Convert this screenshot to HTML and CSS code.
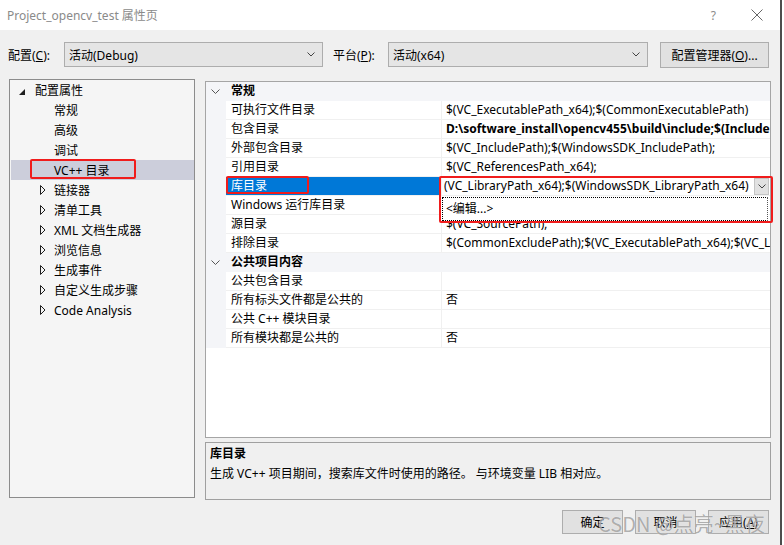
FILE: index.html
```html
<!DOCTYPE html>
<html lang="zh-CN">
<head>
    <meta charset="UTF-8">
    <title>Project_opencv_test 属性页</title>
    <link rel="stylesheet" href="styles.css">
</head>
<body>
<div class="window">

    <div class="titlebar">
        <span class="title">Project_opencv_test 属性页</span>
        <span class="help">?</span>
        <span class="close">
            <svg width="12" height="12" viewBox="0 0 12 12"><path d="M0.5 0.5 L11.5 11.5 M11.5 0.5 L0.5 11.5" stroke="#666" stroke-width="1" fill="none"/></svg>
        </span>
    </div>

    <div class="toolbar">
        <span class="label cfg-label">配置(<u>C</u>):</span>
        <div class="combo cfg-combo">
            <span>活动(Debug)</span>
            <svg class="chev" width="8" height="5" viewBox="0 0 8 5"><path d="M0.5 0.5 L4 4 L7.5 0.5" stroke="#444" fill="none"/></svg>
        </div>
        <span class="label plat-label">平台(<u>P</u>):</span>
        <div class="combo plat-combo">
            <span>活动(x64)</span>
            <svg class="chev" width="8" height="5" viewBox="0 0 8 5"><path d="M0.5 0.5 L4 4 L7.5 0.5" stroke="#444" fill="none"/></svg>
        </div>
        <button class="btn manager-btn">配置管理器(<u>O</u>)...</button>
    </div>

    <div class="main">
        <div class="tree">
            <div class="tree-item root">
                <span class="twisty"><svg width="6" height="6" viewBox="0 0 6 6"><polygon points="6,0 6,6 0,6" fill="#1e1e1e"/></svg></span>
                配置属性
            </div>
            <div class="tree-item child">常规</div>
            <div class="tree-item child">高级</div>
            <div class="tree-item child">调试</div>
            <div class="tree-item child selected">VC++ 目录</div>
            <div class="tree-item child"><span class="twisty"><svg width="6" height="10" viewBox="0 0 6 10"><polygon points="0.5,0.5 5,5 0.5,9.5" fill="none" stroke="#1e1e1e"/></svg></span>链接器</div>
            <div class="tree-item child"><span class="twisty"><svg width="6" height="10" viewBox="0 0 6 10"><polygon points="0.5,0.5 5,5 0.5,9.5" fill="none" stroke="#1e1e1e"/></svg></span>清单工具</div>
            <div class="tree-item child"><span class="twisty"><svg width="6" height="10" viewBox="0 0 6 10"><polygon points="0.5,0.5 5,5 0.5,9.5" fill="none" stroke="#1e1e1e"/></svg></span>XML 文档生成器</div>
            <div class="tree-item child"><span class="twisty"><svg width="6" height="10" viewBox="0 0 6 10"><polygon points="0.5,0.5 5,5 0.5,9.5" fill="none" stroke="#1e1e1e"/></svg></span>浏览信息</div>
            <div class="tree-item child"><span class="twisty"><svg width="6" height="10" viewBox="0 0 6 10"><polygon points="0.5,0.5 5,5 0.5,9.5" fill="none" stroke="#1e1e1e"/></svg></span>生成事件</div>
            <div class="tree-item child"><span class="twisty"><svg width="6" height="10" viewBox="0 0 6 10"><polygon points="0.5,0.5 5,5 0.5,9.5" fill="none" stroke="#1e1e1e"/></svg></span>自定义生成步骤</div>
            <div class="tree-item child"><span class="twisty"><svg width="6" height="10" viewBox="0 0 6 10"><polygon points="0.5,0.5 5,5 0.5,9.5" fill="none" stroke="#1e1e1e"/></svg></span>Code Analysis</div>
        </div>

        <div class="right">
            <div class="grid">
                <div class="row cat">
                    <span class="gutter"><svg width="9" height="5" viewBox="0 0 9 5"><path d="M0.5 0.5 L4.5 4.5 L8.5 0.5" stroke="#555" fill="none"/></svg></span>
                    <span class="cat-name">常规</span>
                </div>
                <div class="row"><span class="gutter"></span><span class="name">可执行文件目录</span><span class="value">$(VC_ExecutablePath_x64);$(CommonExecutablePath)</span></div>
                <div class="row"><span class="gutter"></span><span class="name">包含目录</span><span class="value bold">D:\software_install\opencv455\build\include;$(IncludePath)</span></div>
                <div class="row"><span class="gutter"></span><span class="name">外部包含目录</span><span class="value">$(VC_IncludePath);$(WindowsSDK_IncludePath);</span></div>
                <div class="row"><span class="gutter"></span><span class="name">引用目录</span><span class="value">$(VC_ReferencesPath_x64);</span></div>
                <div class="row active">
                    <span class="gutter"></span>
                    <span class="name">库目录</span>
                    <span class="value edit">
                        <span class="edit-text">(VC_LibraryPath_x64);$(WindowsSDK_LibraryPath_x64)</span>
                        <span class="drop-btn"><svg width="8" height="5" viewBox="0 0 8 5"><path d="M0.5 0.5 L4 4 L7.5 0.5" stroke="#444" fill="none"/></svg></span>
                    </span>
                </div>
                <div class="row"><span class="gutter"></span><span class="name">Windows 运行库目录</span><span class="value">$(WindowsSDK_LibraryPath_x64);</span></div>
                <div class="row"><span class="gutter"></span><span class="name">源目录</span><span class="value">$(VC_SourcePath);</span></div>
                <div class="row"><span class="gutter"></span><span class="name">排除目录</span><span class="value">$(CommonExcludePath);$(VC_ExecutablePath_x64);$(VC_LibraryPath_x64)</span></div>
                <div class="row cat">
                    <span class="gutter"><svg width="9" height="5" viewBox="0 0 9 5"><path d="M0.5 0.5 L4.5 4.5 L8.5 0.5" stroke="#555" fill="none"/></svg></span>
                    <span class="cat-name">公共项目内容</span>
                </div>
                <div class="row"><span class="gutter"></span><span class="name">公共包含目录</span><span class="value"></span></div>
                <div class="row"><span class="gutter"></span><span class="name">所有标头文件都是公共的</span><span class="value">否</span></div>
                <div class="row"><span class="gutter"></span><span class="name">公共 C++ 模块目录</span><span class="value"></span></div>
                <div class="row"><span class="gutter"></span><span class="name">所有模块都是公共的</span><span class="value">否</span></div>

                <div class="dropdown"><span>&lt;编辑...&gt;</span></div>
            </div>

            <div class="desc">
                <div class="desc-title">库目录</div>
                <div>生成 VC++ 项目期间，搜索库文件时使用的路径。 与环境变量 LIB 相对应。</div>
            </div>
        </div>
    </div>

    <div class="buttons">
        <button class="btn">确定</button>
        <button class="btn">取消</button>
        <button class="btn">应用(<u>A</u>)</button>
    </div>

    <!-- red annotation boxes from the screenshot -->
    <div class="mark mark-tree"></div>
    <div class="mark mark-name"></div>
    <div class="mark mark-value"></div>

    <div class="watermark">CSDN @点亮~黑夜</div>
</div>
</body>
</html>
```

FILE: styles.css
```css
body {
    margin: 0;
    background: #fff;
    font-family: "Noto Sans", "Noto Sans CJK SC", sans-serif;
    font-size: 12px;
    color: #000;
}

.window {
    position: relative;
    width: 780px;
    height: 545px;
    background: #f0f0f0;
    border-right: 2px solid #4d4d4d;
    overflow: hidden;
}

/* title bar */
.titlebar {
    height: 30px;
    background: #fff;
    display: flex;
    align-items: center;
    padding-left: 7px;
}

.title {
    color: #8a8a8a;
    flex: 1;
}

.help {
    color: #8a8a8a;
    margin-right: 35px;
}

.close {
    display: flex;
    margin-right: 17px;
}

/* config row */
.toolbar {
    display: flex;
    align-items: center;
    margin-top: 11px;
    height: 27px;
    padding-left: 8px;
}

.label {
    white-space: nowrap;
}

.cfg-label {
    width: 56px;
}

.plat-label {
    width: 55px;
}

.combo {
    box-sizing: border-box;
    height: 25px;
    background: #e5e5e5;
    border: 1px solid #adadad;
    display: flex;
    align-items: center;
    justify-content: space-between;
    padding: 0 7px 0 4px;
}

.cfg-combo {
    width: 259px;
    margin-right: 10px;
}

.plat-combo {
    width: 260px;
    margin-right: 12px;
}

.btn {
    box-sizing: border-box;
    font-family: inherit;
    font-size: 12px;
    color: #000;
    background: #e1e1e1;
    border: 1px solid #adadad;
    padding: 0;
    height: 25px;
}

.manager-btn {
    width: 109px;
    height: 26px;
}

/* main area */
.main {
    display: flex;
    margin-top: 11px;
    padding-left: 9px;
}

.tree {
    box-sizing: border-box;
    width: 186px;
    height: 419px;
    border: 1px solid #8c8c8c;
    background: #f5f5f5;
}

.tree-item {
    display: flex;
    align-items: center;
    height: 20px;
    white-space: nowrap;
}

.tree-item.root {
    padding-left: 9px;
}

.tree-item.root .twisty {
    width: 16px;
    padding-top: 1px;
}

.tree-item.child {
    padding-left: 44px;
}

.tree-item.child .twisty {
    width: 14px;
    margin-left: -14px;
    display: flex;
    align-items: center;
}

.tree-item.selected {
    background: #cccedb;
    margin-left: 1px;
    padding-left: 43px;
}

.right {
    margin-left: 10px;
    width: 566px;
}

/* property grid */
.grid {
    position: relative;
    box-sizing: border-box;
    margin-top: 2px;
    height: 357px;
    border: 1px solid #a5a5a5;
    background: #fff;
}

.row {
    display: flex;
    height: 19px;
    line-height: 18px;
    white-space: nowrap;
}

.gutter {
    width: 20px;
    flex: none;
    background: #f4f5f8;
    display: flex;
    align-items: center;
    justify-content: center;
    padding-right: 2px;
    box-sizing: border-box;
}

.name {
    box-sizing: border-box;
    width: 216px;
    flex: none;
    padding-left: 5px;
    border-right: 1px solid #f0f0f0;
    border-bottom: 1px solid #f0f0f0;
    overflow: hidden;
}

.value {
    box-sizing: border-box;
    width: 328px;
    flex: none;
    padding-left: 4px;
    border-bottom: 1px solid #f0f0f0;
    overflow: hidden;
}

.value.bold {
    font-weight: bold;
}

.row.cat {
    background: #f4f5f8;
}

.cat-name {
    font-weight: bold;
    padding-left: 5px;
}

.row.active .name {
    background: #0078d7;
    color: #fff;
}

.value.edit {
    display: flex;
    align-items: center;
    padding-left: 2px;
    padding-right: 1px;
}

.edit-text {
    flex: 1;
    overflow: hidden;
}

.drop-btn {
    box-sizing: border-box;
    width: 15px;
    height: 17px;
    background: #e1e1e1;
    border: 1px solid #c4c4c4;
    display: flex;
    align-items: center;
    justify-content: center;
}

.dropdown {
    position: absolute;
    left: 235px;
    top: 114px;
    width: 328px;
    height: 25px;
    box-sizing: border-box;
    background: #fff;
    padding: 1px;
}

.dropdown span {
    display: block;
    height: 22px;
    line-height: 21px;
    padding-left: 3px;
    border: 1px dotted #000;
    border-right-color: #555;
}

/* description */
.desc {
    box-sizing: border-box;
    margin-top: 4px;
    height: 58px;
    border: 1px solid #a0a0a0;
    padding: 1px 4px;
    line-height: 20px;
}

.desc-title {
    font-weight: bold;
}

/* dialog buttons */
.buttons {
    display: flex;
    justify-content: flex-end;
    gap: 12px;
    margin-top: 10px;
    padding-right: 11px;
}

.buttons .btn {
    width: 61px;
    height: 24px;
}

/* red annotations */
.mark {
    position: absolute;
    box-sizing: border-box;
    border: 2px solid #f01c1c;
    border-radius: 2px;
}

.mark-tree {
    left: 30px;
    top: 159px;
    width: 106px;
    height: 20px;
}

.mark-name {
    left: 226px;
    top: 176px;
    width: 83px;
    height: 18px;
}

.mark-value {
    left: 439px;
    top: 176px;
    width: 334px;
    height: 47px;
}

.watermark {
    position: absolute;
    left: 598px;
    top: 509px;
    font-family: "Noto Sans CJK SC", sans-serif;
    font-size: 20px;
    color: rgba(110, 110, 110, 0.55);
    text-shadow: 0 0 1px rgba(255, 255, 255, 0.8);
    white-space: nowrap;
    pointer-events: none;
}
```
